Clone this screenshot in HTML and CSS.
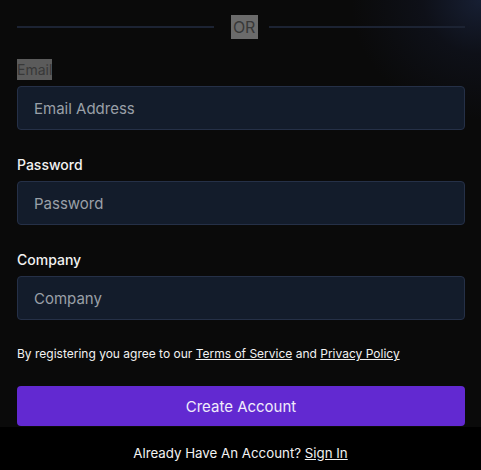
FILE: index.html
```html
<!DOCTYPE html>
<html lang="en">
<head>
<meta charset="utf-8">
<title>Create Account</title>
<link rel="stylesheet" href="styles.css">
</head>
<body>
<div class="page">
  <main class="form">
    <div class="divider">
      <span class="line"></span>
      <span class="or">OR</span>
      <span class="line"></span>
    </div>
    <div class="field first">
      <label class="label muted" for="email">Email</label>
      <input class="input" id="email" type="email" placeholder="Email Address">
    </div>
    <div class="field">
      <label class="label" for="password">Password</label>
      <input class="input" id="password" type="password" placeholder="Password">
    </div>
    <div class="field">
      <label class="label" for="company">Company</label>
      <input class="input" id="company" type="text" placeholder="Company">
    </div>
    <p class="terms">By registering you agree to our <a href="#">Terms of Service</a> and <a href="#">Privacy Policy</a></p>
    <button class="submit" type="button">Create Account</button>
  </main>
  <footer class="footer">Already Have An Account? <a href="#">Sign In</a></footer>
</div>
</body>
</html>
```
FILE: styles.css
```css
* { box-sizing: border-box; }
html, body { margin: 0; padding: 0; }
body {
  background: #0a0a0a;
  font-family: Inter, Roboto, "Liberation Sans", sans-serif;
  color: #f2f2f2;
  width: 481px;
  height: 470px;
  overflow: hidden;
}
.page {
  height: 470px;
  display: flex;
  flex-direction: column;
  background:
    radial-gradient(ellipse 130px 120px at 100% 0%, rgba(36, 52, 92, 0.5) 0, rgba(24, 32, 60, 0.28) 45%, rgba(10, 10, 10, 0) 100%),
    #0a0a0a;
}
.form {
  padding: 15px 16px 0 17px;
  display: flex;
  flex-direction: column;
}
.divider {
  display: flex;
  align-items: center;
  height: 24px;
}
.line {
  flex: 1;
  height: 2px;
  background: #1c2333;
}
.or {
  margin: 0 11px 0 17px;
  width: 27px;
  height: 24px;
  line-height: 24px;
  text-align: center;
  font-size: 16px;
  letter-spacing: -0.3px;
  background: #6b6b6b;
  color: #383838;
}
.field {
  display: flex;
  flex-direction: column;
  margin-top: 24px;
}
.field.first { margin-top: 20px; }
.label {
  font-size: 14px;
  line-height: 21px;
  font-weight: 500;
  margin-bottom: 6px;
  align-self: flex-start;
}
.label.muted {
  background: #5b5b5b;
  color: #383838;
  font-weight: 400;
}
.input {
  height: 44px;
  width: 100%;
  background: #131c2b;
  border: 1px solid #253047;
  border-radius: 4px;
  padding: 0 16px;
  font-family: inherit;
  font-size: 15px;
  color: #e5e7eb;
  outline: none;
}
.input::placeholder { color: #9aa0a8; }
.terms {
  margin: 25px 0 0;
  font-size: 12px;
  line-height: 18px;
  color: #f2f2f2;
}
.terms a { color: #f2f2f2; text-decoration: underline; }
.submit {
  margin-top: 23px;
  height: 40px;
  width: 100%;
  border: none;
  border-radius: 4px;
  background: #6229d1;
  color: #f0ecfb;
  font-family: inherit;
  font-size: 15px;
}
.footer {
  margin-top: auto;
  height: 43px;
  background: #000;
  text-align: center;
  font-size: 13.3px;
  line-height: 52px;
  color: #f2f2f2;
}
.footer a { color: #f2f2f2; text-decoration: underline; }
```
